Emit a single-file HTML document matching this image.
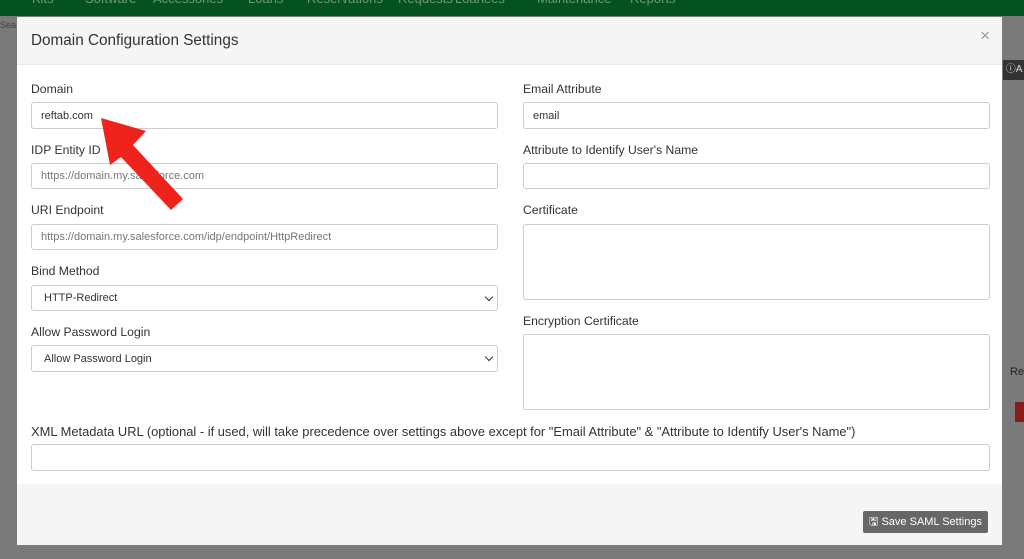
<!DOCTYPE html><html><head><style>
body{margin:0;width:1024px;height:559px;overflow:hidden;background:#7a7a7a;font-family:"Liberation Sans",Helvetica,sans-serif;position:relative}
.top{position:absolute;left:0;top:0;width:1024px;height:16px;background:#03521f;color:#6f9a78;font-size:13px;white-space:nowrap;overflow:hidden}
.top span{position:absolute;top:-9px}
.modal{position:absolute;left:17px;top:17px;width:985px;height:528px;background:#fff}
.hdr{height:47px;background:#f5f5f5;border-bottom:1px solid #e8e8e8;position:relative}
.hdr h4{margin:0;position:absolute;left:14px;top:15px;font-size:15.3px;font-weight:normal;color:#333}
.x{position:absolute;right:12px;top:9px;font-size:17px;color:#999}
.ftr{position:absolute;left:0;top:467px;width:985px;height:61px;background:#f5f5f5}
.btn{position:absolute;left:846px;top:27px;width:125px;height:22px;background:#676767;color:#fff;font-size:11px;line-height:22px;text-align:center;border-radius:2px}
label{position:absolute;font-size:12.2px;color:#333}
.in{position:absolute;border:1px solid #ccc;border-radius:3px;background:#fff;font-size:11px;color:#333;box-sizing:border-box;padding-left:9px;line-height:24px}
.ph{color:#777}
.sel::after{content:"";position:absolute;right:5px;top:8px;width:5px;height:5px;border-right:1.5px solid #333;border-bottom:1.5px solid #333;transform:rotate(45deg)}
</style></head><body>
<div class="top"><span style="left:32px">Kits</span><span style="left:85px">Software</span><span style="left:153px">Accessories</span><span style="left:248px">Loans</span><span style="left:307px">Reservations</span><span style="left:398px">Requests</span><span style="left:455px">Loanees</span><span style="left:537px">Maintenance</span><span style="left:630px">Reports</span></div>
<div style="position:absolute;left:0;top:20px;font-size:9px;color:#444">Sea</div>
<div style="position:absolute;left:1003px;top:60px;width:21px;height:20px;background:#333;color:#ddd;font-size:10px;line-height:20px;white-space:nowrap;overflow:hidden">&nbsp;ⓘA</div>
<div style="position:absolute;left:1015px;top:402px;width:9px;height:20px;background:#8b1a1a"></div>
<div style="position:absolute;left:1010px;top:366px;font-size:11px;color:#222">Re</div>
<div class="modal">
<div class="hdr"><h4>Domain Configuration Settings</h4><span class="x">×</span></div>
<label style="left:14px;top:65px">Domain</label>
<div class="in" style="left:14px;top:85px;width:467px;height:27px;line-height:26px">reftab.com</div>
<label style="left:14px;top:126px">IDP Entity ID</label>
<div class="in ph" style="left:14px;top:146px;width:467px;height:26px"><span class="ph">https://domain.my.salesforce.com</span></div>
<label style="left:14px;top:186px">URI Endpoint</label>
<div class="in" style="left:14px;top:207px;width:467px;height:26px"><span class="ph">https://domain.my.salesforce.com/idp/endpoint/HttpRedirect</span></div>
<label style="left:14px;top:247px">Bind Method</label>
<div class="in sel" style="left:14px;top:268px;width:467px;height:26px;padding-left:12px">HTTP-Redirect</div>
<label style="left:14px;top:308px">Allow Password Login</label>
<div class="in sel" style="left:14px;top:328px;width:467px;height:27px;padding-left:12px;line-height:26px">Allow Password Login</div>
<label style="left:506px;top:65px">Email Attribute</label>
<div class="in" style="left:506px;top:85px;width:467px;height:27px;line-height:26px">email</div>
<label style="left:506px;top:126px">Attribute to Identify User's Name</label>
<div class="in" style="left:506px;top:146px;width:467px;height:26px"></div>
<label style="left:506px;top:186px">Certificate</label>
<div class="in" style="left:506px;top:207px;width:467px;height:76px"></div>
<label style="left:506px;top:297px">Encryption Certificate</label>
<div class="in" style="left:506px;top:317px;width:467px;height:76px"></div>
<label style="left:14px;top:407px;font-size:12.9px">XML Metadata URL (optional - if used, will take precedence over settings above except for "Email Attribute" &amp; "Attribute to Identify User's Name")</label>
<div class="in" style="left:14px;top:427px;width:959px;height:27px"></div>
<div class="ftr"><div class="btn">🖫 Save SAML Settings</div></div>
</div>
<svg style="position:absolute;left:0;top:0" width="1024" height="559"><polygon points="101,118 146,131 133,145 183,199 171,210 121,157 110,165" fill="#f0231c"/></svg>
</body></html>
